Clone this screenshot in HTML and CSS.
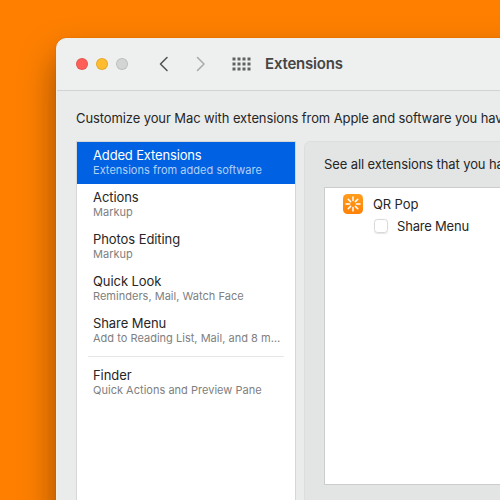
FILE: index.html
```
<!DOCTYPE html>
<html lang="en">
<head>
<meta charset="utf-8">
<title>Extensions</title>
<link rel="stylesheet" href="styles.css">
</head>
<body>
<main class="window">
  <header class="toolbar">
    <div class="lights"><i class="light close"></i><i class="light minimize"></i><i class="light disabled"></i></div>
    <svg class="chevron back" width="10" height="16" viewBox="0 0 10 16"><path d="M8 1.5 1.5 8 8 14.5"/></svg>
    <svg class="chevron forward" width="10" height="16" viewBox="0 0 10 16"><path d="M1.5 1.5 8 8 1.5 14.5"/></svg>
    <svg class="grid-icon" width="19" height="14" viewBox="0 0 19 14"><path d="M.5 2h18M.5 7h18M.5 12h18"/></svg>
    <h1 class="title">Extensions</h1>
  </header>
  <p class="intro">Customize your Mac with extensions from Apple and software you hav</p>
  <div class="panes">
    <nav class="sidebar">
      <div class="row selected"><div class="name">Added Extensions</div><div class="sub">Extensions from added software</div></div>
      <div class="row"><div class="name">Actions</div><div class="sub">Markup</div></div>
      <div class="row"><div class="name">Photos Editing</div><div class="sub">Markup</div></div>
      <div class="row"><div class="name">Quick Look</div><div class="sub">Reminders, Mail, Watch Face</div></div>
      <div class="row"><div class="name">Share Menu</div><div class="sub">Add to Reading List, Mail, and 8 m…</div></div>
      <hr class="separator">
      <div class="row"><div class="name">Finder</div><div class="sub">Quick Actions and Preview Pane</div></div>
    </nav>
    <section class="group">
      <p class="caption">See all extensions that you ha</p>
      <div class="list">
        <div class="app">
          <svg class="app-icon" width="20" height="20" viewBox="0 0 20 20">
            <defs><linearGradient id="orange" x2="0" y2="1"><stop stop-color="#ff9d1c"/><stop offset="1" stop-color="#ff8106"/></linearGradient></defs>
            <rect width="20" height="20" rx="4.5" fill="url(#orange)"/>
            <path d="M10 3v3.6M10 13.4V17M3 10h3.6M13.4 10H17M5.2 5.2l2.4 2.4M12.4 12.4l2.4 2.4M14.8 5.2l-2.4 2.4M7.6 12.4l-2.4 2.4" stroke="#fff" stroke-width="1.5" stroke-linecap="round"/>
          </svg>
          <span class="app-name">QR Pop</span>
        </div>
        <label class="option"><span class="checkbox"></span><span class="option-name">Share Menu</span></label>
      </div>
    </section>
  </div>
</main>
</body>
</html>
```
FILE: styles.css
```
* { box-sizing: border-box; }
html { overflow: hidden; }
body {
  margin: 0;
  height: 500px;
  overflow: hidden;
  padding: 38px 0 0 56px;
  background: #ff8000;
  font: 13px/16px Inter, "Liberation Sans", sans-serif;
  color: #262626;
}
p, h1 { margin: 0; white-space: nowrap; }
.window {
  width: 620px;
  height: 580px;
  background: #eaeceb;
  border-radius: 10px;
  border: 1px solid #f3eee8;
  box-shadow: 0 0 1px rgba(0,0,0,.35), 0 18px 36px rgba(0,0,0,.4);
  overflow: hidden;
}
.toolbar {
  height: 52px;
  display: flex;
  align-items: center;
  padding: 0 0 1px 19px;
  background: #eef0ef;
  border-bottom: 1px solid #d1d3d2;
}
.lights { display: flex; gap: 8px; }
.light { width: 12px; height: 12px; border-radius: 50%; border: .5px solid rgba(0,0,0,.1); }
.close { background: #ff5f57; }
.minimize { background: #febc2e; }
.disabled { background: #d3d5d4; }
.chevron { fill: none; stroke-width: 1.6; stroke-linecap: round; stroke-linejoin: round; }
.back { margin-left: 31px; stroke: #555; }
.forward { margin-left: 27px; stroke: #aaacab; }
.grid-icon { margin-left: 26px; fill: none; stroke: #606161; stroke-width: 3; stroke-dasharray: 3 2; }
.title { margin-left: 14px; font-size: 15px; line-height: 20px; font-weight: 600; letter-spacing: -.2px; color: #454545; }
.intro { margin: 19px 0 0 19px; letter-spacing: -.1px; }
.panes { display: flex; align-items: stretch; gap: 8px; margin: 15px 0 0 19px; height: 420px; }
.sidebar { width: 220px; flex: none; background: #fff; border: 1px solid #d5d7d6; }
.row { height: 42px; padding: 5px 0 0 16px; white-space: nowrap; }
.name { letter-spacing: -.08px; }
.sub { font-size: 11px; line-height: 14px; letter-spacing: .02px; color: #808080; }
.selected { background: #0062e2; color: #fff; }
.selected .name { letter-spacing: -.15px; }
.selected .sub { color: #b3d0f6; }
.separator { height: 1px; border: 0; margin: 4px 11px 5px; background: #e6e6e6; }
.group { flex: 1; background: #e3e5e4; border: 1px solid #dcdedd; border-radius: 6px; padding: 14px 19px; }
.caption { letter-spacing: -.1px; }
.list { height: 298px; margin-top: 15px; padding: 6px 0 0 18px; background: #fff; border: 1px solid #cbcdcc; }
.app { display: flex; align-items: center; height: 20px; }
.app-name { margin-left: 10px; letter-spacing: -.12px; }
.option { display: flex; align-items: center; height: 16px; margin: 4px 0 0 31px; }
.checkbox { width: 14px; height: 14px; border: 1px solid #d9d9d9; border-radius: 3.5px; box-shadow: 0 .5px 1px rgba(0,0,0,.1); }
.option-name { margin-left: 9px; letter-spacing: -.2px; }
```
